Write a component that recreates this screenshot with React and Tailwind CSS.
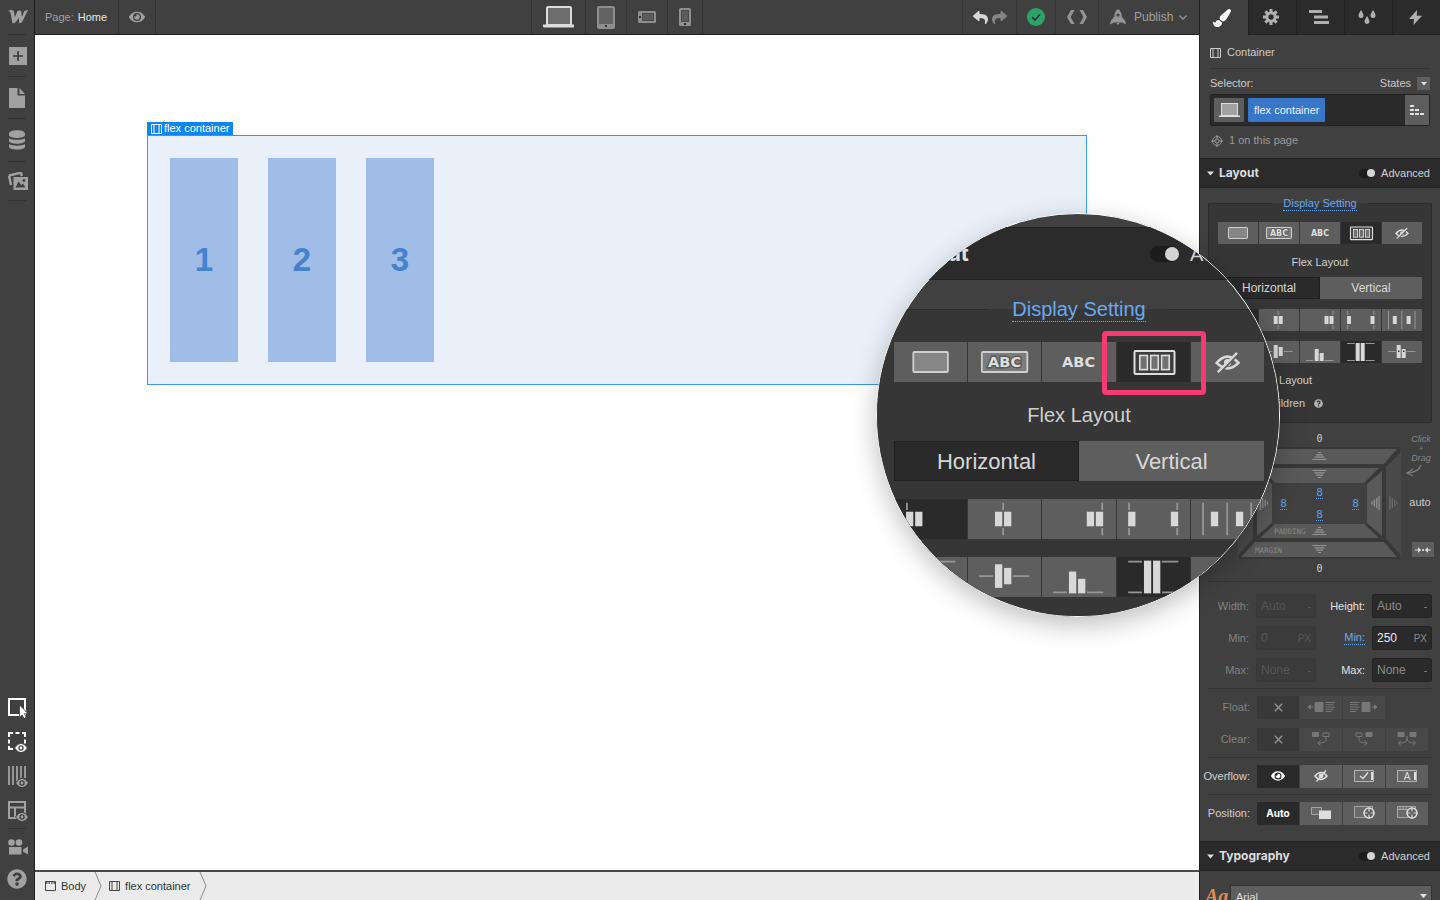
import React, { useState } from "react";
import {
  FaDatabase,
  FaEye,
  FaPaintBrush,
  FaQuestionCircle,
  FaReply,
  FaShare,
} from "react-icons/fa";

const SMALL = {
  header: "h-[30px] pl-[7px] pr-[10px]",
  arrow: "w-[7px] h-[5px] mr-[5px]",
  title: "text-[12px]",
  toggle: "w-[16px] h-[9px] mr-[6px]",
  knob: "w-[8px] h-[8px]",
  text: "text-[11px]",
  fieldset: "mx-2 mt-[7px] px-[9px]",
  legend: "px-3 text-[11px] leading-[16px]",
  link: "leading-[13px]",
  top: "pt-[11px]",
  cell: "h-[22px]",
  label: "h-[33px] pt-[4px] text-[11px]",
  direction: "text-[12px]",
  gap: "mt-[10px]",
};

const LARGE = {
  header: "h-[53px] pl-[13px] pr-[18px]",
  arrow: "w-[13px] h-[8px] mr-[9px]",
  title: "text-[22px]",
  toggle: "w-[29px] h-[16px] mr-[11px]",
  knob: "w-[14px] h-[14px]",
  text: "text-[20px]",
  fieldset: "mx-[15px] mt-[15px] px-[17px]",
  legend: "px-[22px] text-[20px] leading-[28px]",
  link: "leading-[23px]",
  top: "pt-[19px]",
  cell: "h-[40px]",
  label: "h-[59px] pt-[6px] text-[20px]",
  direction: "text-[22px]",
  gap: "mt-[18px]",
};

const LIGHT = "#d8d8d8";
const LINE = "#969696";

const Bars = ({ rects }) =>
  rects.map(([x, y, w, h], i) => (
    <rect key={i} x={x} y={y} width={w} height={h} fill={LIGHT} />
  ));

const displayIcons = [
  {
    name: "Block",
    icon: <rect x="10.5" y="5.5" width="19" height="11" rx="0.6" fill="#868686" stroke="#cfcfcf" />,
  },
  {
    name: "Inline block",
    icon: (
      <>
        <rect x="7.5" y="5.5" width="25" height="11" rx="0.6" fill="#7c7c7c" stroke="#cfcfcf" />
        <text x="20" y="14" textAnchor="middle" fontSize="8" fontWeight="700" fontFamily="DejaVu Sans, sans-serif" fill="#dedede" stroke="#5a5a5a" strokeWidth="1.6" paintOrder="stroke">
          ABC
        </text>
      </>
    ),
  },
  {
    name: "Inline",
    icon: (
      <text x="20" y="14" textAnchor="middle" fontSize="8" fontWeight="700" fontFamily="DejaVu Sans, sans-serif" fill="#dedede">
        ABC
      </text>
    ),
  },
  {
    name: "Flex",
    icon: (
      <g stroke="#dedede" fill="none">
        <rect x="9.5" y="5" width="22" height="12.6" rx="0.6" fill="#3c3c3c" strokeWidth="1.1" />
        <rect x="12.4" y="7.4" width="4.2" height="7.8" fill="#707070" strokeWidth="0.9" />
        <rect x="18.4" y="7.4" width="4.2" height="7.8" fill="#707070" strokeWidth="0.9" />
        <rect x="24.4" y="7.4" width="4.2" height="7.8" fill="#707070" strokeWidth="0.9" />
      </g>
    ),
  },
  {
    name: "None",
    icon: (
      <g stroke={LIGHT} fill="none">
        <path d="M14 11.5Q20 4.5 26 11.5Q20 17.5 14 11.5Z" strokeWidth="1.5" />
        <circle cx="20" cy="11.3" r="2" fill={LIGHT} stroke="none" />
        <path d="M15.4 17.2L26 6.6" stroke="#5e5e5e" strokeWidth="1.2" />
        <path d="M14.6 16.6L25.2 6" strokeWidth="1.3" />
      </g>
    ),
  },
];

const justifyIcons = [
  {
    name: "Justify start",
    icon: (
      <>
        <path d="M7 2v4M7 16v4" stroke={LINE} />
        <Bars rects={[[6.5, 7, 4, 8], [11.5, 7, 4, 8]]} />
      </>
    ),
  },
  {
    name: "Justify center",
    icon: (
      <>
        <path d="M19.2 2v4M19.2 16v4" stroke={LINE} />
        <Bars rects={[[14.7, 7, 4, 8], [19.7, 7, 4, 8]]} />
      </>
    ),
  },
  {
    name: "Justify end",
    icon: (
      <>
        <path d="M33 2v4M33 16v4" stroke={LINE} />
        <Bars rects={[[24.5, 7, 4, 8], [29.5, 7, 4, 8]]} />
      </>
    ),
  },
  {
    name: "Space between",
    icon: (
      <>
        <path d="M6.5 2v4M6.5 16v4M33 2v4M33 16v4" stroke={LINE} />
        <Bars rects={[[6, 7, 4, 8], [29.5, 7, 4, 8]]} />
      </>
    ),
  },
  {
    name: "Space around",
    icon: (
      <>
        <path d="M6.5 2v18M19.8 2v18M33 2v18" stroke={LINE} />
        <Bars rects={[[10.8, 7, 4, 8], [24.6, 7, 4, 8]]} />
      </>
    ),
  },
];

const alignIcons = [
  {
    name: "Align start",
    icon: (
      <>
        <path d="M6 2.5h7.6M24.6 2.5h9" stroke={LINE} />
        <Bars rects={[[14.7, 2, 4, 12], [19.7, 2, 4, 8]]} />
      </>
    ),
  },
  {
    name: "Align center",
    icon: (
      <>
        <path d="M6 10.5h7.6M24.6 10.5h9" stroke={LINE} />
        <Bars rects={[[14.7, 4, 4, 13], [19.7, 6, 4, 9]]} />
      </>
    ),
  },
  {
    name: "Align end",
    icon: (
      <>
        <path d="M6 19.5h7.6M24.6 19.5h9" stroke={LINE} />
        <Bars rects={[[14.7, 8, 4, 12], [19.7, 12, 4, 8]]} />
      </>
    ),
  },
  {
    name: "Stretch",
    icon: (
      <>
        <path d="M6 2.5h7.6M24.6 2.5h9M6 19.5h7.6M24.6 19.5h9" stroke={LINE} />
        <Bars rects={[[14.7, 2, 4, 18], [19.7, 2, 4, 18]]} />
      </>
    ),
  },
  {
    name: "Baseline",
    icon: (
      <>
        <path d="M6 10.5h7.6M24.6 10.5h9" stroke={LINE} />
        <Bars rects={[[14.7, 4, 4, 13], [19.7, 8, 4, 9]]} />
        <path d="M16 9.5h1.5v1.5h-1.5zM21 9.5h1.5v1.5h-1.5z" fill="#3c3c3c" />
      </>
    ),
  },
];

function ButtonRow({ items, active, size, className = "" }) {
  const [selected, setSelected] = useState(active);
  return (
    <div className={`grid grid-cols-5 gap-px ${className}`}>
      {items.map((item, i) => (
        <button
          key={item.name}
          type="button"
          aria-label={item.name}
          aria-pressed={selected === i}
          onClick={() => setSelected(i)}
          className={`${size.cell} ${selected === i ? "bg-[#2a2a2a]" : "bg-[#5e5e5e]"}`}
        >
          <svg viewBox="0 0 40 22" className="block w-full h-full" fill="none">
            {item.icon}
          </svg>
        </button>
      ))}
    </div>
  );
}

function SectionHeader({ title, size }) {
  return (
    <div className={`flex items-center shrink-0 bg-[#2b2b2b] border-y border-[#222222] ${size.header}`}>
      <svg viewBox="0 0 7 5" className={size.arrow}>
        <path d="M0 0.5h7L3.5 4.5z" fill="#e0e0e0" />
      </svg>
      <h2 className={`font-bold font-['Inter',sans-serif] text-[#dedede] ${size.title}`}>{title}</h2>
      <button
        type="button"
        aria-label={`${title} advanced`}
        className={`ml-auto flex items-center justify-end rounded-full bg-[#1c1c1c] ${size.toggle}`}
      >
        <span className={`rounded-full bg-[#d4d4d4] ${size.knob}`} />
      </button>
      <span className={`text-[#d0d0d0] ${size.text}`}>Advanced</span>
    </div>
  );
}

function DisplaySettings({ size, children }) {
  const [direction, setDirection] = useState("Horizontal");
  return (
    <fieldset className={`min-w-0 shrink-0 bg-[#363636] border border-[#2c2c2c] rounded-[2px] ${size.fieldset}`}>
      <legend className={`mx-auto text-[#68a9f2] ${size.legend}`}>
        <a href="#display" className={`inline-block border-b border-dotted border-[#68a9f2] ${size.link}`}>
          Display Setting
        </a>
      </legend>
      <ButtonRow items={displayIcons} active={3} size={size} className={size.top} />
      <p className={`flex items-center justify-center text-[#d0d0d0] ${size.label}`}>Flex Layout</p>
      <div className={`grid grid-cols-2 text-[#d8d8d8] ${size.direction}`}>
        {["Horizontal", "Vertical"].map((name) => (
          <button
            key={name}
            type="button"
            onClick={() => setDirection(name)}
            className={`${size.cell} ${
              direction === name ? "bg-[#2a2a2a] outline outline-1 -outline-offset-1 outline-[#202020]" : "bg-[#5e5e5e]"
            }`}
          >
            {name}
          </button>
        ))}
      </div>
      <ButtonRow items={justifyIcons} active={0} size={size} className={size.gap} />
      <ButtonRow items={alignIcons} active={3} size={size} className={size.gap} />
      {children}
    </fieldset>
  );
}

const ContainerIcon = ({ className }) => (
  <svg viewBox="0 0 11 10" className={className} fill="none" stroke="currentColor">
    <path d="M0.5 0.5h10v9h-10zM3 0.5v9M8 0.5v9" />
  </svg>
);

const LaptopIcon = ({ className }) => (
  <svg viewBox="0 0 31 22" className={className}>
    <rect x="4" y="1" width="24" height="18" rx="1" fill="#6e6e6e" stroke="currentColor" strokeWidth="2" />
    <path d="M0 18.5h31v2q0 1-1 1H1q-1 0-1-1z" fill="currentColor" />
  </svg>
);

const devices = [
  { name: "Desktop", width: "w-[54px]", icon: <LaptopIcon className="w-[31px] h-[22px] text-[#dcdcdc]" /> },
  {
    name: "Tablet",
    width: "w-[41px]",
    icon: (
      <svg width="18" height="23" viewBox="0 0 18 23">
        <rect x="1" y="1" width="16" height="21" rx="1" fill="#626262" stroke="#8e8e8e" strokeWidth="2" />
        <path d="M1 18h16v4H1z" fill="#8e8e8e" />
        <rect x="8" y="19" width="2" height="2" fill="#333" />
      </svg>
    ),
  },
  {
    name: "Phone landscape",
    width: "w-[41px]",
    icon: (
      <svg width="18" height="12" viewBox="0 0 18 12">
        <rect width="18" height="12" rx="1.5" fill="#8e8e8e" />
        <rect x="4.5" y="2.5" width="11" height="7" fill="#5c5c5c" stroke="#4a4a4a" />
        <rect x="1" y="5" width="2" height="2" fill="#333" />
      </svg>
    ),
  },
  {
    name: "Phone",
    width: "w-[35px]",
    icon: (
      <svg width="12" height="18" viewBox="0 0 12 18">
        <rect width="12" height="18" rx="1.5" fill="#8e8e8e" />
        <rect x="2.5" y="2.5" width="7" height="11" fill="#5c5c5c" stroke="#4a4a4a" />
        <rect x="5" y="15" width="2" height="2" fill="#333" />
      </svg>
    ),
  },
];

function TopBar() {
  return (
    <header className="flex h-[35px] shrink-0 bg-[#404040] border-b border-[#222222] text-[11px] text-[#a0a0a0]">
      <div className="flex flex-1 min-w-0">
        <div className="flex items-center pl-[10px] w-[84px] border-r border-[#353535]">
          Page:<span className="ml-1 text-[#e6e6e6]">Home</span>
        </div>
        <button type="button" aria-label="Preview" className="flex items-center justify-center w-[37px] border-r border-[#353535]">
          <FaEye size={16} />
        </button>
      </div>
      <div className="flex border-l border-[#353535]">
        {devices.map((device) => (
          <button
            key={device.name}
            type="button"
            aria-label={device.name}
            className={`flex items-center justify-center border-r border-[#353535] ${device.width}`}
          >
            {device.icon}
          </button>
        ))}
      </div>
      <div className="flex flex-1 min-w-0 justify-end">
        <div className="flex items-center justify-center gap-1 w-[55px] border-x border-[#353535]">
          <button type="button" aria-label="Undo">
            <FaReply size={15} className="text-[#d8d8d8]" />
          </button>
          <button type="button" aria-label="Redo">
            <FaShare size={15} className="text-[#858585]" />
          </button>
        </div>
        <button type="button" aria-label="Saved" className="flex items-center justify-center w-[39px] border-r border-[#353535]">
          <svg width="18" height="18" viewBox="0 0 18 18" fill="none">
            <circle cx="9" cy="9" r="9" fill="#2ba469" />
            <path d="M5 9.2L8 12l5-5.5" stroke="#343434" strokeWidth="1.8" />
          </svg>
        </button>
        <button type="button" aria-label="Code" className="flex items-center justify-center w-[43px] border-r border-[#353535]">
          <svg width="20" height="14" viewBox="0 0 20 14" fill="#949494">
            <path d="M4 0h3.500L3.600 7l3.900 7H4L0 7zM12.500 0H16l4 7-4 7h-3.500l3.900-7z" />
          </svg>
        </button>
        <button type="button" className="flex items-center w-[100px] pl-[11px] text-[12px]">
          <svg width="16" height="16" viewBox="0 0 16 16" fill="#949494" className="mr-2">
            <path fillRule="evenodd" d="M8 0q4 3 3.6 7.5L15 11.5 16 15.5l-4-2H4l-4 2 1-4 3.4-4Q4 3 8 0zM8 4.5a1.6 1.6 0 100 3.2 1.6 1.6 0 000-3.2z" />
            <path d="M6.5 14h3L8 16z" />
          </svg>
          Publish
          <svg width="8" height="5" viewBox="0 0 8 5" fill="none" stroke="#949494" strokeWidth="1.3" className="ml-[6px]">
            <path d="M0.5 0.5L4 4l3.500-3.500" />
          </svg>
        </button>
      </div>
    </header>
  );
}

const SmallEye = ({ cx, cy }) => (
  <g>
    <path d={`M${cx - 6.5} ${cy}q6.500-9.500 13 0q-6.500 9.500-13 0z`} fill="currentColor" stroke="#404040" strokeWidth="1" />
    <circle cx={cx} cy={cy} r="2.700" fill="#404040" />
    <circle cx={cx} cy={cy} r="1.400" fill="currentColor" />
  </g>
);

function SideBar() {
  const cell = "flex items-center justify-center w-full pl-[2px] text-[#a1a1a1]";
  return (
    <nav className="flex flex-col items-center w-[35px] shrink-0 bg-[#404040] border-r border-[#1e1e1e]">
      <a href="#dashboard" aria-label="Dashboard" className={`${cell} h-[34px]`}>
        <svg width="20" height="14" viewBox="0 0 20 14" fill="currentColor">
          <path d="M20 0l-5.500 11.200q-1 2-3.300 2l-.5-5.400q-1.500 2.600-2.900 4.300-1 1.200-3.300 1.300L2.600 3Q2.200 1 0 1q5-2.200 6 .8l.8 5.500Q8.600 4 9.300 1q3-1.300 4 .2l.5 5.600Q15.500 4 16 1.500 17 0 20 0z" />
        </svg>
      </a>
      <hr className="w-[18px] border-[#333333]" />
      <button type="button" aria-label="Add element" className={`${cell} h-[41px]`}>
        <svg width="18" height="18" viewBox="0 0 18 18">
          <path d="M0 0h18v18H0z" fill="currentColor" />
          <path d="M9 4v10M4 9h10" stroke="#3a3a3a" strokeWidth="1.6" />
        </svg>
      </button>
      <hr className="w-[18px] border-[#333333]" />
      <button type="button" aria-label="Pages" className={`${cell} h-[41px] pr-[2px]`}>
        <svg width="16" height="20" viewBox="0 0 16 20" fill="currentColor">
          <path d="M0 0h8.500v7.500H16V20H0zM10.500 0L16 6h-5.500z" />
        </svg>
      </button>
      <hr className="w-[18px] border-[#333333]" />
      <button type="button" aria-label="Collections" className={`${cell} h-[42px] pr-[2px]`}>
        <svg width="16" height="20" viewBox="0 0 16 20" fill="currentColor">
          <path d="M0 3.500C0-1 16-1 16 3.500V5c0 4-16 4-16 0zM0 8.200c3 2.200 13 2.200 16 0v2.600c0 4-16 4-16 0zM0 14c3 2.200 13 2.200 16 0v2.600c0 4.200-16 4.200-16 0z" />
        </svg>
      </button>
      <hr className="w-[18px] border-[#333333]" />
      <button type="button" aria-label="Assets" className={`${cell} h-[38px]`}>
        <svg width="20" height="18" viewBox="0 0 20 18">
          <path d="M1 3.500L13 0.700l.8 3.300M1 3.500l2 9.500" stroke="currentColor" strokeWidth="2.400" fill="none" />
          <path d="M5.500 5H20v13H5.500z" fill="currentColor" />
          <path d="M7.500 15.500l3-6 3 3.500 1.500-1.500 2.500 4z" fill="#404040" />
          <circle cx="16" cy="8.500" r="1.400" fill="#404040" />
        </svg>
      </button>
      <hr className="w-[18px] border-[#333333]" />
      <div className="mt-auto" />
      <button type="button" aria-label="Select" className={`${cell} h-[34px] text-white`}>
        <svg width="20" height="20" viewBox="0 0 20 20">
          <path d="M1 1h16v16H1z" fill="none" stroke="#ffffff" strokeWidth="2" />
          <path d="M11.500 7l8.500 8.500-3.600.3 1.900 3.500-2.300 1.200-1.800-3.600-2.700 2.500z" fill="#ffffff" stroke="#404040" strokeWidth="0.800" />
        </svg>
      </button>
      <button type="button" aria-label="Show empty elements" className={`${cell} h-[34px]`}>
        <svg width="20" height="20" viewBox="0 0 20 20" className="text-white">
          <path d="M1 5V1h4M7.500 1h4M14 1h3v4M1 7.500v4M17 7.500v4M1 14v3h4" fill="none" stroke="currentColor" strokeWidth="2" />
          <SmallEye cx={13} cy={16} />
        </svg>
      </button>
      <button type="button" aria-label="Show grid" className={`${cell} h-[35px]`}>
        <svg width="20" height="21" viewBox="0 0 20 21">
          <path d="M1 0v19M5 0v19M9 0v15M13 0v12M17 0v12" stroke="currentColor" strokeWidth="1.800" />
          <SmallEye cx={14} cy={17} />
        </svg>
      </button>
      <button type="button" aria-label="Show outlines" className={`${cell} h-[34px]`}>
        <svg width="20" height="20" viewBox="0 0 20 20">
          <path d="M1 1h16v16H1zM1 6.500h16M7 6.500V17" fill="none" stroke="currentColor" strokeWidth="2" />
          <SmallEye cx={14} cy={16} />
        </svg>
      </button>
      <hr className="w-[18px] border-[#333333]" />
      <button type="button" aria-label="Video tutorials" className={`${cell} h-[35px]`}>
        <svg width="20" height="16" viewBox="0 0 20 16" fill="currentColor">
          <circle cx="3.500" cy="3.500" r="3.300" />
          <circle cx="11" cy="3.500" r="3.300" />
          <path d="M1 8h12.500v7.500H1zM15 10.500l5-3v8l-5-3z" />
        </svg>
      </button>
      <button type="button" aria-label="Help" className={`${cell} h-[36px] pr-[2px] pb-[6px]`}>
        <FaQuestionCircle size={20} />
      </button>
    </nav>
  );
}

function Canvas() {
  return (
    <main className="flex-1 min-h-0 bg-white px-[112px] pt-[87px]">
      <div className="max-w-[940px] mx-auto">
        <div className="flex items-center gap-[2px] w-fit h-[13px] px-1 bg-[#0d86f2] text-white text-[11px]">
          <ContainerIcon className="w-[11px] h-[10px]" />
          <span className="leading-[13px]">flex container</span>
        </div>
        <div className="flex gap-[30px] h-[250px] p-[22px] bg-[#e9f0f9] border border-[#3d97e0]">
          {[1, 2, 3].map((n) => (
            <div key={n} className="flex items-center justify-center w-[68px] bg-[#9fbde6] text-[33px] font-bold text-[#4482cb]">
              {n}
            </div>
          ))}
        </div>
      </div>
    </main>
  );
}

const CrumbArrow = () => (
  <svg width="8" height="28" viewBox="0 0 8 28" fill="none" stroke="#8c8c8c">
    <path d="M1 0l6 14-6 14" />
  </svg>
);

function Breadcrumbs() {
  return (
    <footer className="flex items-center h-[30px] shrink-0 bg-[#ebebeb] border-t-2 border-[#4a4a4a] text-[11px] text-[#333333]">
      <a href="#body" className="flex items-center gap-[5px] pl-[10px] pr-2">
        <svg width="11" height="10" viewBox="0 0 11 10" fill="none" stroke="#444">
          <path d="M0.5 0.5h10v9h-10z" />
          <path d="M1 2h9" strokeDasharray="1.500 1" strokeWidth="1.500" />
        </svg>
        Body
      </a>
      <CrumbArrow />
      <a href="#flex-container" className="flex items-center gap-[5px] pl-[7px] pr-2">
        <ContainerIcon className="w-[11px] h-[10px] text-[#444444]" />
        flex container
      </a>
      <CrumbArrow />
    </footer>
  );
}

const tabs = [
  { name: "Style", icon: <FaPaintBrush size={18} className="text-white" /> },
  {
    name: "Settings",
    icon: (
      <svg width="16" height="16" viewBox="0 0 16 16" fill="none" stroke="currentColor">
        <circle cx="8" cy="8" r="4.200" strokeWidth="3" />
        <path
          d="M8 0v3M8 13v3M0 8h3M13 8h3M2.350 2.350l2.100 2.100M11.550 11.550l2.100 2.100M2.350 13.650l2.100-2.100M11.550 4.450l2.100-2.100"
          strokeWidth="3"
        />
      </svg>
    ),
  },
  {
    name: "Navigator",
    icon: (
      <svg width="20" height="14" viewBox="0 0 20 14" fill="currentColor">
        <path d="M0 0h13v3H0zM5 5.500h14v3H5zM5 11h15v3H5z" />
      </svg>
    ),
  },
  {
    name: "Style manager",
    icon: (
      <svg width="18" height="14" viewBox="0 0 18 14" fill="currentColor">
        <path d="M3 0q2.500 4 2.500 5.500a2.500 2.500 0 01-5 0Q.5 4 3 0zM9 6q2.500 4 2.500 5.500a2.500 2.500 0 01-5 0Q6.500 10 9 6zM15 0q2.500 4 2.500 5.500a2.500 2.500 0 01-5 0Q12.500 4 15 0z" />
      </svg>
    ),
  },
  {
    name: "Interactions",
    icon: (
      <svg width="13" height="15" viewBox="0 0 13 15" fill="currentColor">
        <path d="M8 0L0 9h5L4.500 15 13 5.800H7.800z" />
      </svg>
    ),
  },
];

function SelectorSection() {
  return (
    <section className="px-[10px] shrink-0 text-[11px] text-[#cccccc]">
      <div className="flex items-center gap-[6px] h-[34px] pt-[2px] border-b border-[#333333]">
        <ContainerIcon className="w-[11px] h-[10px]" />
        Container
      </div>
      <div className="flex items-center justify-between h-[25px] pt-[4px]">
        <span>Selector:</span>
        <button type="button" className="flex items-center gap-[6px]">
          States
          <span className="flex items-center justify-center w-[13px] h-[13px] bg-[#5e5e5e]">
            <svg width="6" height="4" viewBox="0 0 6 4" fill="#e0e0e0">
              <path d="M0 0h6L3 3.500z" />
            </svg>
          </span>
        </button>
      </div>
      <div className="flex items-stretch h-[32px] border border-[#222222] bg-[#2a2a2a] rounded-[2px]">
        <button type="button" aria-label="Breakpoint" className="flex items-center justify-center w-[30px] my-[3px] ml-[3px] bg-[#5e5e5e] rounded-[1px]">
          <svg width="21" height="15" viewBox="0 0 21 15">
            <rect x="2.500" y="0.500" width="16" height="12" fill="#a2a2a2" stroke="#dedede" />
            <path d="M0 12.500h21v1.500H0z" fill="#dedede" />
          </svg>
        </button>
        <button type="button" className="my-[3px] ml-1 px-[6px] rounded-[1px] bg-[#3876c8] text-[#eaf2fc]">
          flex container
        </button>
        <button type="button" aria-label="Selector list" className="flex items-center justify-center w-[24px] ml-auto bg-[#5e5e5e]">
          <svg width="14" height="10" viewBox="0 0 14 10" fill="#e0e0e0">
            <path d="M0 0h4v2H0zM0 4h4v2H0zM5 4h4v2H5zM0 8h4v2H0zM5 8h4v2H5zM10 8h4v2h-4z" />
          </svg>
        </button>
      </div>
      <div className="flex items-center gap-[6px] h-[32px] pb-[3px] pl-px text-[#9a9a9a]">
        <svg width="12" height="12" viewBox="0 0 12 12" fill="none" stroke="currentColor">
          <circle cx="6" cy="6" r="4.500" />
          <circle cx="6" cy="6" r="2" />
          <path d="M6 0v4M6 8v4M0 6h4M8 6h4" />
        </svg>
        1 on this page
      </div>
    </section>
  );
}

const Stripes = ({ x, y, dir, color = "#959595" }) => {
  const turn = { up: 0, down: 180, left: -90, right: 90 }[dir];
  return (
    <path
      d="M-1.500-3.500h3M-3.500-1.200h7M-5 1.200h10M-7 3.500h14"
      transform={`translate(${x} ${y}) rotate(${turn})`}
      stroke={color}
      strokeWidth="1.200"
    />
  );
};

function BoxModel() {
  const values = [
    [119.5, 66],
    [83.5, 77],
    [155.5, 77],
    [119.5, 88],
  ];
  return (
    <section className="flex shrink-0 mt-[7px] h-[151px] mr-2">
      <svg viewBox="0 0 202 146" className="w-[202px] h-[146px] shrink-0" fontFamily="DejaVu Sans Mono, monospace">
        <path d="M39 17H200V129H39z" fill="#383838" />
        <path d="M72 52H167V95H72z" fill="#404040" />
        <g fill="#595959">
          <path d="M41 19H197L184 34H55z" />
          <path d="M41 127H197L184 112H55z" />
          <path d="M60 38H179L164 53H75z" />
          <path d="M60 108H179L164 94H75z" />
          <path d="M182 41V106L167 93V54z" />
          <path d="M57 41V106L72 93V54z" />
        </g>
        <g fill="#494949">
          <path d="M201 22V125L186 109V37z" />
          <path d="M38 22V125L53 109V37z" />
        </g>
        <Stripes x={119.5} y={26} dir="up" />
        <Stripes x={119.5} y={44} dir="down" />
        <Stripes x={119.5} y={101} dir="up" />
        <Stripes x={119.5} y={119} dir="down" />
        <Stripes x={175.500} y={73} dir="left" />
        <Stripes x={193.500} y={73} dir="right" color="#6c6c6c" />
        <Stripes x={64} y={73} dir="right" />
        <g fontSize="11" textAnchor="middle">
          <g fill="#d0d0d0" fontSize="10">
            <text x="119.5" y="12">0</text>
            <text x="119.5" y="142">0</text>
          </g>
          {values.map(([x, y]) => (
            <g key={`${x}-${y}`}>
              <text x={x} y={y} fill="#5f9ee6">8</text>
              <path d={`M${x - 3.5} ${y + 2.5}h7`} stroke="#5f9ee6" strokeDasharray="1 1" />
            </g>
          ))}
        </g>
        <g fontSize="7.5" fill="#888888">
          <text x="74" y="104">PADDING</text>
          <text x="55" y="123">MARGIN</text>
        </g>
      </svg>
      <div className="flex flex-col items-center flex-1 pl-1 text-[11px] text-[#cccccc]">
        <svg width="28" height="50" viewBox="0 0 28 50" fill="none" className="mt-[2px]">
          <g fontSize="9" fontStyle="italic" fill="#858585" textAnchor="middle">
            <text x="15" y="10">Click</text>
            <text x="15" y="19" fontSize="7">+</text>
            <text x="15" y="29">Drag</text>
          </g>
          <path d="M15 33q-2 7-13 8M7 37l-6 4 6 3" stroke="#7c7c7c" strokeWidth="1.200" />
        </svg>
        <span className="mt-[13px] leading-[14px]">auto</span>
        <button type="button" aria-label="Center element" className="flex items-center justify-center w-[22px] h-[15px] mt-[33px] self-end bg-[#5e5e5e]">
          <svg width="16" height="6" viewBox="0 0 16 6" fill="#e0e0e0" stroke="#e0e0e0">
            <path d="M0 3h4M16 3h-4M7.500 2.500h1v1h-1z" />
            <path d="M3 .2L6.200 3 3 5.800zM13 .2L9.800 3l3.200 2.800z" stroke="none" />
          </svg>
        </button>
      </div>
    </section>
  );
}

const sizeRows = [
  { left: "Width:", leftValue: "Auto", leftUnit: "-", right: "Height:", rightValue: "Auto", rightUnit: "-" },
  { left: "Min:", leftValue: "0", leftUnit: "PX", right: "Min:", rightValue: "250", rightUnit: "PX", set: true },
  { left: "Max:", leftValue: "None", leftUnit: "-", right: "Max:", rightValue: "None", rightUnit: "-" },
];

function SizeField({ id, value, unit, disabled, set }) {
  return (
    <div
      className={`flex items-center w-[60px] h-[24px] px-[4px] border rounded-[2px] ${
        disabled ? "bg-[#3b3b3b] border-[#383838] text-[#565656]" : "bg-[#2a2a2a] border-[#232323] text-[#8a8a8a]"
      }`}
    >
      <input
        id={id}
        defaultValue={value}
        disabled={disabled}
        className={`w-[34px] min-w-0 bg-transparent text-[12px] outline-none ${set ? "text-[#e8e8e8]" : ""}`}
      />
      <span className="ml-auto text-[10px]">{unit}</span>
    </div>
  );
}

function SizeSection() {
  return (
    <section className="mx-2 pt-3 pb-[6px] shrink-0 border-y border-[#343434] flex flex-col gap-2 text-[11px]">
      {sizeRows.map((row, i) => (
        <div key={row.left} className="flex items-center justify-between">
          <label htmlFor={`left-${i}`} className="w-[41px] text-right text-[#828282]">
            {row.left}
          </label>
          <SizeField id={`left-${i}`} value={row.leftValue} unit={row.leftUnit} disabled />
          <label htmlFor={`right-${i}`} className="w-[42px] flex justify-end text-[#e0e0e0]">
            <span className={row.set ? "text-[#68a9f2] border-b border-dotted border-[#68a9f2] leading-[13px]" : ""}>
              {row.right}
            </span>
          </label>
          <SizeField id={`right-${i}`} value={row.rightValue} unit={row.rightUnit} set={row.set} />
        </div>
      ))}
    </section>
  );
}

const CrossIcon = (
  <svg width="9" height="9" viewBox="0 0 9 9" stroke="currentColor" strokeWidth="1.500">
    <path d="M0.800 0.800l7.400 7.400M8.200 0.800L0.800 8.200" />
  </svg>
);

const floatIcons = [
  CrossIcon,
  <svg width="28" height="10" viewBox="0 0 28 10" stroke="currentColor" fill="currentColor">
    <path d="M2 5h4M3.500 3L1 5l2.500 2zM8 .5h8v9H8z" />
    <path d="M18.500 .5H28M18.500 2.700h8M18.500 5H28M18.500 7.200h8M18.500 9.500h6" />
  </svg>,
  <svg width="28" height="10" viewBox="0 0 28 10" stroke="currentColor" fill="currentColor">
    <path d="M22 5h4M24.500 3L27 5l-2.500 2zM12 .5h8v9h-8z" />
    <path d="M0 .5h9.500M0 2.700h8M0 5h9.500M0 7.200h8M0 9.500h6" />
  </svg>,
];

const clearIcons = [
  CrossIcon,
  <svg width="18" height="14" viewBox="0 0 18 14" stroke="currentColor" fill="none">
    <path d="M0.500 0.500h6v4h-6z" fill="currentColor" />
    <path d="M11 1h6v3.500h-6zM14 5v3q0 3-8 3M8.500 8.500L6 11l2.500 2.500" />
  </svg>,
  <svg width="18" height="14" viewBox="0 0 18 14" stroke="currentColor" fill="none">
    <path d="M11 0.500h6v4h-6z" fill="currentColor" />
    <path d="M1 1h6v3.500H1zM4 5v3q0 3 8 3M9.500 8.500L12 11l-2.500 2.500" />
  </svg>,
  <svg width="20" height="14" viewBox="0 0 20 14" stroke="currentColor" fill="none">
    <path d="M1 0.500h6v4H1zM13 0.500h6v4h-6z" fill="currentColor" />
    <path d="M10 4v3q0 4-8 4M10 7q0 4 8 4M4 8.500L1.500 11 4 13.500M16 8.500l2.500 2.500-2.500 2.500" />
  </svg>,
];

const overflowIcons = [
  <FaEye size={14} className="text-white" />,
  <svg width="14" height="12" viewBox="0 0 14 12" stroke="currentColor" fill="none">
    <path d="M1 6Q7-1 13 6Q7 13 1 6z" strokeWidth="1.500" />
    <circle cx="7" cy="6" r="2" fill="currentColor" />
    <path d="M2.500 11.500L12 .5" strokeWidth="1.400" />
  </svg>,
  <svg width="20" height="12" viewBox="0 0 20 12" stroke="currentColor" fill="none">
    <path d="M.5.5h19v11H.5z" stroke="#b5b5b5" fill="#6a6a6a" />
    <path d="M6 6l3 2.500 5-6" strokeWidth="1.400" />
    <path d="M18 2v8" strokeWidth="2" />
  </svg>,
  <svg width="20" height="12" viewBox="0 0 20 12" stroke="currentColor" fill="none">
    <path d="M.5.5h19v11H.5z" stroke="#b5b5b5" fill="#6a6a6a" />
    <text x="10" y="9.500" fontSize="10" textAnchor="middle" fill="currentColor" stroke="none">A</text>
    <path d="M18 2v8" strokeWidth="2" />
  </svg>,
];

const Crosshair = (
  <>
    <circle cx="15" cy="7" r="5" strokeWidth="1.500" fill="#5e5e5e" />
    <path d="M15 1.500v4M15 8.500v4M9.500 7h4M16.500 7h4" strokeWidth="1.200" />
  </>
);

const positionIcons = [
  <span className="text-[10px] font-bold text-white font-['Inter',sans-serif]">Auto</span>,
  <svg width="20" height="12" viewBox="0 0 20 12">
    <path d="M.5.5h10v7H.5z" fill="#6a6a6a" stroke="#a5a5a5" />
    <path d="M8 3.500h12V12H8z" fill="currentColor" />
  </svg>,
  <svg width="21" height="14" viewBox="0 0 21 14" stroke="currentColor" fill="none">
    <path d="M.5.5h18v11H.5z" stroke="#a5a5a5" fill="#6a6a6a" />
    {Crosshair}
  </svg>,
  <svg width="21" height="14" viewBox="0 0 21 14" stroke="currentColor" fill="none">
    <path d="M.5.5h18v11H.5zM.5 3.500h18M3 1v2M6 1v2M9 1v2" stroke="#a5a5a5" fill="#6a6a6a" />
    {Crosshair}
  </svg>,
];

function OptionRow({ label, icons, disabled }) {
  return (
    <div className="flex items-center gap-[7px] h-[24px]">
      <span className={`w-[50px] flex justify-end text-[11px] ${disabled ? "text-[#828282]" : "text-[#d0d0d0]"}`}>{label}</span>
      <div className="flex gap-px">
        {icons.map((icon, i) => (
          <button
            key={i}
            type="button"
            disabled={disabled}
            aria-label={`${label} option ${i + 1}`}
            className={`flex items-center justify-center w-[42px] h-[23px] ${
              disabled
                ? i === 0
                  ? "bg-[#393939] text-[#909090]"
                  : "bg-[#484848] text-[#777777]"
                : i === 0
                  ? "bg-[#2a2a2a]"
                  : "bg-[#5e5e5e] text-[#dedede]"
            }`}
          >
            {icon}
          </button>
        ))}
      </div>
    </div>
  );
}

function StylePanel() {
  return (
    <aside className="flex flex-col w-[241px] shrink-0 h-screen overflow-hidden bg-[#404040] border-l border-[#222222]">
      <div className="grid grid-cols-5 h-[35px] shrink-0 text-[#b0b0b0]">
        {tabs.map((tab, i) => (
          <button
            key={tab.name}
            type="button"
            aria-label={tab.name}
            className={`flex items-center justify-center ${
              i === 0 ? "bg-[#404040] pr-1" : "bg-[#2b2b2b] border-b border-l border-[#222222] pr-[3px]"
            }`}
          >
            {tab.icon}
          </button>
        ))}
      </div>
      <SelectorSection />
      <SectionHeader title="Layout" size={SMALL} />
      <DisplaySettings size={SMALL}>
        <div className="mt-[6px] pb-[7px] text-[11px] text-[#d0d0d0]">
          <label className="flex items-center gap-[6px] h-[23px]">
            <input type="checkbox" className="w-[11px] h-[11px]" />
            Reverse Layout
          </label>
          <label className="flex items-center gap-[6px] h-[23px]">
            <input type="checkbox" className="w-[11px] h-[11px]" />
            Wrap Children
            <FaQuestionCircle size={9} className="ml-[3px] text-[#b5b5b5]" />
          </label>
        </div>
      </DisplaySettings>
      <BoxModel />
      <SizeSection />
      <div className="flex flex-col gap-2 py-[6px] shrink-0">
        <OptionRow label="Float:" icons={floatIcons} disabled />
        <OptionRow label="Clear:" icons={clearIcons} disabled />
      </div>
      <hr className="mx-2 shrink-0 border-[#343434]" />
      <div className="py-[6px] shrink-0">
        <OptionRow label="Overflow:" icons={overflowIcons} />
      </div>
      <hr className="mx-2 shrink-0 border-[#343434]" />
      <div className="pt-[6px] pb-4 shrink-0">
        <OptionRow label="Position:" icons={positionIcons} />
      </div>
      <SectionHeader title="Typography" size={SMALL} />
      <div className="flex items-start gap-[3px] pt-[13px] pl-[5px] pr-2 shrink-0">
        <label htmlFor="font" className="w-[22px] text-[20px] leading-[24px] italic font-bold font-['Liberation_Serif',serif] text-[#e58a50]">
          Aa
        </label>
        <div className="relative flex-1">
          <select id="font" className="appearance-none w-full h-[24px] px-[5px] bg-[#5e5e5e] border border-[#333333] text-[11px] text-[#dedede]">
            <option>Arial</option>
          </select>
          <svg width="7" height="5" viewBox="0 0 7 5" className="absolute right-[5px] top-[10px]">
            <path d="M0 0h7L3.500 4z" fill="#e8e8e8" />
          </svg>
        </div>
      </div>
    </aside>
  );
}

function Magnifier() {
  return (
    <div className="absolute top-[213px] right-[160px] w-[404px] h-[404px] flex justify-center rounded-full overflow-hidden border border-white bg-[#404040] shadow-[0_8px_26px_rgba(0,0,0,0.25)]">
      <div className="w-[438px] shrink-0 pt-[13px] pl-[2px]">
        <SectionHeader title="Layout" size={LARGE} />
        <DisplaySettings size={LARGE}>
          <div className="h-[40px]" />
        </DisplaySettings>
      </div>
    </div>
  );
}

function App() {
  return (
    <div className="relative flex h-screen overflow-hidden font-['Liberation_Sans',Arial,sans-serif]">
      <SideBar />
      <div className="flex flex-col flex-1 min-w-0">
        <TopBar />
        <Canvas />
        <Breadcrumbs />
      </div>
      <StylePanel />
      <Magnifier />
      <div className="absolute top-[331px] right-[234px] w-[104px] h-[64px] rounded-[4px] border-5 border-[#f93a72] pointer-events-none" />
    </div>
  );
}

export default App;
